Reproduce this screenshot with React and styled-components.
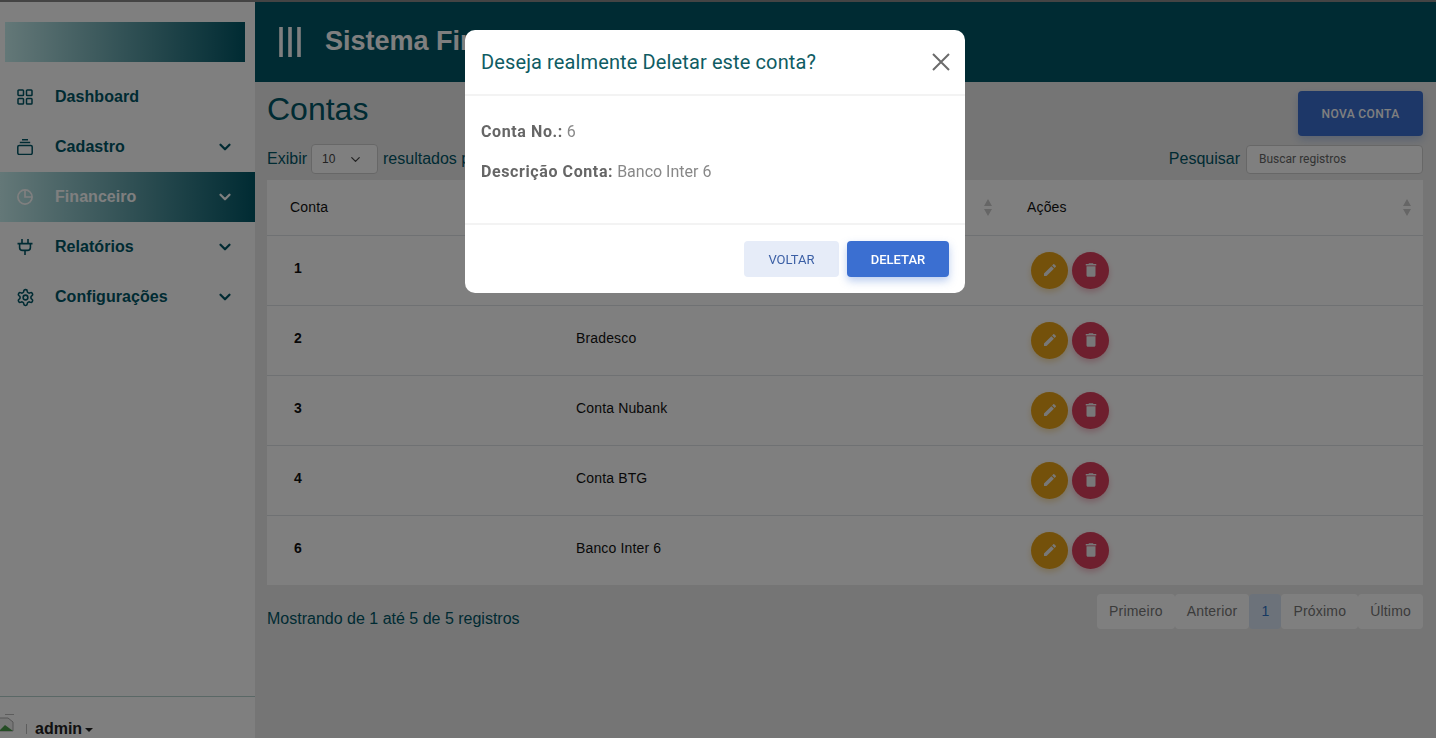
import React from 'react';
import styled, { createGlobalStyle } from 'styled-components';
import { MdEdit, MdDelete } from 'react-icons/md';
import { LuChevronDown, LuSettings } from 'react-icons/lu';

const GlobalStyle = createGlobalStyle`
  html, body {
    margin: 0;
    padding: 0;
    height: 100%;
    overflow: hidden;
  }
  body {
    font-family: "Liberation Sans", Arial, sans-serif;
    font-size: 16px;
    color: #005666;
  }
  * {
    box-sizing: border-box;
  }
`;

const Page = styled.div`
  display: flex;
  width: 100%;
  height: 738px;
  border-top: 2px solid #888;
  background: #ebebeb;
  overflow: hidden;
`;

const Sidebar = styled.aside`
  display: flex;
  flex-direction: column;
  flex: 0 0 255px;
  background: white;
  padding-top: 20px;
`;

const Logo = styled.div`
  height: 40px;
  margin: 0 10px 10px 5px;
  background: linear-gradient(to right, #c8f0f0, #005666);
`;

const MenuItem = styled.div`
  display: flex;
  align-items: center;
  height: 50px;
  padding: 0 21px 0 17px;
  font-weight: 700;
  letter-spacing: 0.05px;
  color: ${(p) => (p.$active ? 'white' : '#005666')};
  background: ${(p) => (p.$active ? 'linear-gradient(to right, #c8f0f0, #005666)' : 'transparent')};

  svg.menu-icon {
    flex: 0 0 16px;
    width: 16px;
    height: 16px;
    margin-right: 22px;
  }
  svg.menu-icon-wide {
    flex: 0 0 19px;
    width: 19px;
    height: 19px;
    margin: 0 20.5px 0 -1.5px;
  }
`;

const MenuLabel = styled.span`
  flex: 1;
`;

const SidebarFooter = styled.div`
  display: flex;
  align-items: flex-start;
  margin-top: auto;
  height: 42px;
  padding-top: 23px;
  border-top: 1px solid #b5d0cc;
  font-weight: 700;
  line-height: 18px;
  color: #222;
`;

const BrokenImage = styled.svg`
  flex: 0 0 14px;
  width: 14px;
  height: 18px;
  margin: -6px 12px 0 0;
`;

const Tick = styled.span`
  flex: 0 0 1px;
  width: 1px;
  height: 10px;
  margin: 4px 8px 0 0;
  background: #bbb;
`;

const Caret = styled.span`
  display: inline-block;
  margin: 8px 0 0 3px;
  border-top: 4px solid #222;
  border-left: 4px solid transparent;
  border-right: 4px solid transparent;
`;

const Main = styled.main`
  flex: 1;
  min-width: 0;
  display: flex;
  flex-direction: column;
`;

const Header = styled.header`
  display: flex;
  align-items: center;
  flex: 0 0 80px;
  padding-left: 24px;
  background: #005666;
  color: white;
`;

const MenuBars = styled.svg`
  width: 22px;
  height: 30px;
  margin-right: 24px;
`;

const HeaderTitle = styled.h1`
  margin: 0 0 1px;
  font-size: 27px;
  font-weight: 700;
  white-space: nowrap;
`;

const Content = styled.div`
  padding: 9px 13px 0 12px;
`;

const TitleRow = styled.div`
  display: flex;
  justify-content: space-between;
  align-items: flex-start;
  height: 53px;
`;

const PageTitle = styled.h2`
  margin: 0;
  font-size: 32px;
  line-height: 37px;
  font-weight: 400;
`;

const NewButton = styled.button`
  width: 125px;
  height: 45px;
  border: 0;
  border-radius: 4px;
  background: #3b6fd1;
  color: white;
  font-family: "Roboto", sans-serif;
  font-size: 12px;
  font-weight: 500;
  letter-spacing: 0.4px;
  box-shadow: 0 4px 8px rgba(59, 111, 209, 0.3);
`;

const Controls = styled.div`
  display: flex;
  justify-content: space-between;
  align-items: center;
  height: 30px;
  margin-bottom: 6px;
`;

const ControlGroup = styled.div`
  display: flex;
  align-items: center;
  gap: ${(p) => p.$gap};
`;

const SelectBox = styled.div`
  display: flex;
  align-items: center;
  justify-content: space-between;
  width: 67px;
  height: 30px;
  margin-right: 1px;
  padding: 0 14px 0 10px;
  border: 1px solid #cfcfcf;
  border-radius: 4px;
  background: white;
  font-size: 12px;
  color: #444;
`;

const SearchInput = styled.input`
  width: 177px;
  height: 29px;
  padding: 0 12px;
  border: 1px solid #cfcfcf;
  border-radius: 4px;
  background: white;
  font-family: "Roboto", sans-serif;
  font-size: 12px;

  &::placeholder {
    color: #666;
    opacity: 1;
  }
`;

const Table = styled.table`
  width: 100%;
  table-layout: fixed;
  border-collapse: collapse;
  background: white;
  color: #111;
  font-size: 14px;
  letter-spacing: 0.15px;
`;

const Th = styled.th`
  position: relative;
  height: 55px;
  padding: 0 0 0 23px;
  text-align: left;
  font-weight: 400;
  border-bottom: 1px solid #dee2e6;
  width: ${(p) => p.$width};
`;

const SortIcon = styled.svg`
  position: absolute;
  right: 11px;
  top: 19px;
  width: 10px;
  height: 17px;
`;

const Tr = styled.tr`
  border-bottom: 1px solid #dee2e6;

  &:last-child {
    border-bottom: 0;
  }
`;

const Td = styled.td`
  height: 70px;
  padding: 0 0 4px ${(p) => (p.$bold ? '27px' : '23px')};
  font-weight: ${(p) => (p.$bold ? 700 : 400)};
`;

const ActionCell = styled.td`
  height: 70px;
  padding: 0 0 0 27px;
`;

const Actions = styled.div`
  display: flex;
  gap: 4px;
`;

const RoundButton = styled.button`
  display: flex;
  align-items: center;
  justify-content: center;
  width: 37px;
  height: 37px;
  padding: 0;
  border: 0;
  border-radius: 50%;
  color: #f0f0f0;
  background: ${(p) => p.$color};
  box-shadow: 0 3px 6px ${(p) => p.$color}55;
`;

const TableFooter = styled.div`
  display: flex;
  justify-content: space-between;
  align-items: flex-start;
  padding-top: 9px;
`;

const Info = styled.div`
  padding-top: 16px;
`;

const Pagination = styled.nav`
  display: flex;
`;

const PageLink = styled.span`
  height: 35px;
  padding: 0 12px;
  line-height: 35px;
  font-size: 14px;
  letter-spacing: 0.2px;
  border-radius: 4px;
  color: ${(p) => (p.$active ? '#2f72c4' : '#777')};
  background: ${(p) => (p.$active ? '#d8e4f5' : 'white')};
`;

const Backdrop = styled.div`
  position: fixed;
  inset: 0;
  display: flex;
  justify-content: center;
  align-items: flex-start;
  padding: 30px 6px 0 0;
  background: rgba(0, 0, 0, 0.5);
`;

const Modal = styled.div`
  width: 500px;
  height: 263px;
  border-radius: 10px;
  background: white;
  font-family: "Roboto", sans-serif;
`;

const ModalHeader = styled.div`
  display: flex;
  justify-content: space-between;
  align-items: center;
  height: 66px;
  padding: 0 15px 0 16px;
  border-bottom: 2px solid #f3f3f3;
`;

const ModalTitle = styled.h3`
  margin: 0;
  font-size: 20px;
  font-weight: 400;
  letter-spacing: 0.12px;
  color: #0f5c63;
`;

const CloseIcon = styled.svg`
  width: 18px;
  height: 18px;
`;

const ModalBody = styled.div`
  height: 127px;
  padding: 26px 16px 0;
  color: #888;
  font-size: 16px;
`;

const ModalLine = styled.p`
  margin: 0 0 21px;
  line-height: 19px;

  b {
    font-weight: 700;
    letter-spacing: 0.6px;
    color: #666;
  }
`;

const ModalFooter = styled.div`
  display: flex;
  justify-content: flex-end;
  gap: 8px;
  padding: 16px 16px 0;
  border-top: 2px solid #f3f3f3;
`;

const ModalButton = styled.button`
  width: ${(p) => (p.$primary ? '102px' : '95px')};
  height: 36px;
  border: 0;
  border-radius: 4px;
  font-family: "Roboto", sans-serif;
  font-size: 13px;
  font-weight: ${(p) => (p.$primary ? 500 : 400)};
  color: ${(p) => (p.$primary ? 'white' : '#3b5fa5')};
  background: ${(p) => (p.$primary ? '#3b6fd1' : '#e6ecf8')};
  box-shadow: ${(p) => (p.$primary ? '0 4px 8px rgba(59, 111, 209, 0.35)' : 'none')};
`;

const GridIcon = () => (
  <svg className="menu-icon" viewBox="0 0 16 16" fill="none" stroke="currentColor" strokeWidth="1.5">
    <rect x="1" y="1" width="5.5" height="5.5" rx="0.8" />
    <rect x="9.5" y="1" width="5.5" height="5.5" rx="0.8" />
    <rect x="1" y="9.5" width="5.5" height="5.5" rx="0.8" />
    <rect x="9.5" y="9.5" width="5.5" height="5.5" rx="0.8" />
  </svg>
);

const StackIcon = () => (
  <svg className="menu-icon" viewBox="0 0 16 16" fill="none" stroke="currentColor" strokeWidth="1.5">
    <path d="M5 0.8h6M2.8 3.6h10.4" />
    <rect x="0.8" y="6.4" width="14.4" height="9" rx="1.4" />
  </svg>
);

const PieIcon = () => (
  <svg className="menu-icon" viewBox="0 0 16 16" fill="none" stroke="currentColor" strokeWidth="1.7">
    <circle cx="8" cy="8" r="7.1" />
    <path d="M8 1v7h7" />
  </svg>
);

const PlugIcon = () => (
  <svg className="menu-icon" viewBox="0 0 16 16" fill="none" stroke="currentColor" strokeWidth="1.6">
    <path d="M5 0v4M11 0v4M0.5 4.6h15M2.6 5v3.4a3 3 0 0 0 3 3h4.8a3 3 0 0 0 3-3V5M8 11.4V16" />
  </svg>
);

const rows = [
  { id: 1, name: 'Banco do Brasil' },
  { id: 2, name: 'Bradesco' },
  { id: 3, name: 'Conta Nubank' },
  { id: 4, name: 'Conta BTG' },
  { id: 6, name: 'Banco Inter 6' },
];

const menu = [
  { label: 'Dashboard', icon: <GridIcon /> },
  { label: 'Cadastro', icon: <StackIcon />, sub: true },
  { label: 'Financeiro', icon: <PieIcon />, sub: true, active: true },
  { label: 'Relatórios', icon: <PlugIcon />, sub: true },
  { label: 'Configurações', icon: <LuSettings className="menu-icon-wide" />, sub: true },
];

const Sort = () => (
  <SortIcon viewBox="0 0 10 17">
    <path d="M5 0l4 7H1zM5 17l-4-7h8z" fill="#ccc" />
  </SortIcon>
);

const App = () => (
  <>
    <GlobalStyle />
    <Page>
      <Sidebar>
        <Logo />
        {menu.map((item) => (
          <MenuItem key={item.label} $active={item.active}>
            {item.icon}
            <MenuLabel>{item.label}</MenuLabel>
            {item.sub && <LuChevronDown size={18} strokeWidth={3} />}
          </MenuItem>
        ))}
        <SidebarFooter>
          <BrokenImage viewBox="0 0 14 18">
            <path d="M5 0.5h10" stroke="#bbb" />
            <path d="M0 4h8l5 4v9H0" fill="#eee" stroke="#aaa" />
            <path d="M0 16l5-5 8 6H0z" fill="#4a9a4a" />
          </BrokenImage>
          <Tick />
          <span>admin</span>
          <Caret />
        </SidebarFooter>
      </Sidebar>
      <Main>
        <Header>
          <MenuBars viewBox="0 0 22 30">
            <path d="M2 0v30M11 0v30M20 0v30" stroke="white" strokeWidth="3.6" />
          </MenuBars>
          <HeaderTitle>Sistema Financeiro</HeaderTitle>
        </Header>
        <Content>
          <TitleRow>
            <PageTitle>Contas</PageTitle>
            <NewButton>NOVA CONTA</NewButton>
          </TitleRow>
          <Controls>
            <ControlGroup $gap="4px">
              Exibir
              <SelectBox>
                10
                <LuChevronDown size={15} />
              </SelectBox>
              resultados por página
            </ControlGroup>
            <ControlGroup $gap="6px">
              Pesquisar
              <SearchInput placeholder="Buscar registros" />
            </ControlGroup>
          </Controls>
          <Table>
            <thead>
              <tr>
                <Th $width="286px">Conta<Sort /></Th>
                <Th $width="451px">Descrição<Sort /></Th>
                <Th>Ações<Sort /></Th>
              </tr>
            </thead>
            <tbody>
              {rows.map((row) => (
                <Tr key={row.id}>
                  <Td $bold>{row.id}</Td>
                  <Td>{row.name}</Td>
                  <ActionCell>
                    <Actions>
                      <RoundButton $color="#e8a317"><MdEdit size={16} /></RoundButton>
                      <RoundButton $color="#dc3f5c"><MdDelete size={18} /></RoundButton>
                    </Actions>
                  </ActionCell>
                </Tr>
              ))}
            </tbody>
          </Table>
          <TableFooter>
            <Info>Mostrando de 1 até 5 de 5 registros</Info>
            <Pagination>
              <PageLink>Primeiro</PageLink>
              <PageLink>Anterior</PageLink>
              <PageLink $active>1</PageLink>
              <PageLink>Próximo</PageLink>
              <PageLink>Último</PageLink>
            </Pagination>
          </TableFooter>
        </Content>
      </Main>
    </Page>
    <Backdrop>
      <Modal>
        <ModalHeader>
          <ModalTitle>Deseja realmente Deletar este conta?</ModalTitle>
          <CloseIcon viewBox="0 0 18 18">
            <path d="M1 1l16 16M17 1L1 17" stroke="#6b6b6b" strokeWidth="2" />
          </CloseIcon>
        </ModalHeader>
        <ModalBody>
          <ModalLine><b>Conta No.:</b> 6</ModalLine>
          <ModalLine><b>Descrição Conta:</b> Banco Inter 6</ModalLine>
        </ModalBody>
        <ModalFooter>
          <ModalButton>VOLTAR</ModalButton>
          <ModalButton $primary>DELETAR</ModalButton>
        </ModalFooter>
      </Modal>
    </Backdrop>
  </>
);

export default App;
